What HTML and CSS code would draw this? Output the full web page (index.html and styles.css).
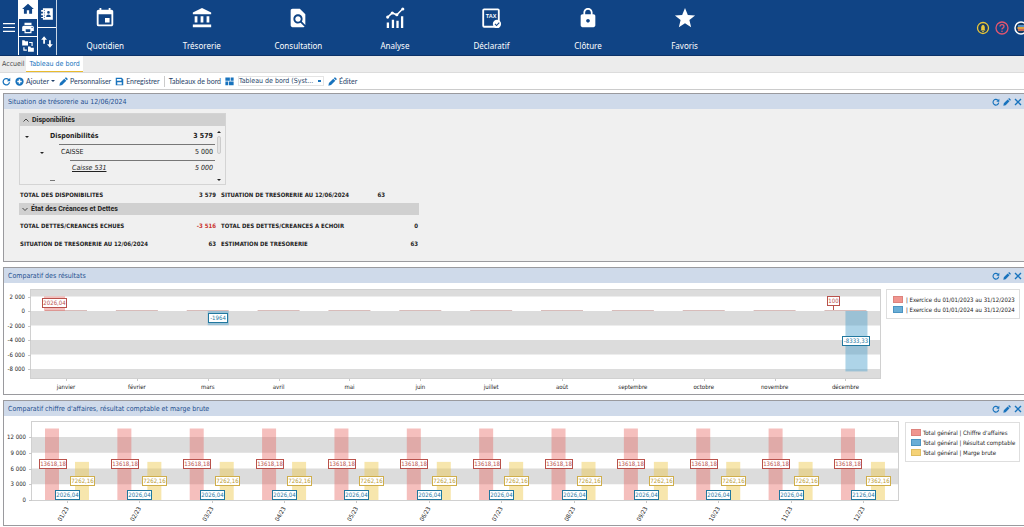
FILE: index.html
```html
<!DOCTYPE html>
<html lang="fr">
<head>
  <meta charset="UTF-8" />
  <meta name="viewport" content="width=device-width, initial-scale=1.0" />
  <title>Tableau de bord</title>
  <link rel="stylesheet" href="styles.css">
</head>
<body>
  <!-- Shared icons -->
  <svg class="sprite" aria-hidden="true">
    <symbol id="i-refresh" viewBox="0 0 24 24"><path d="M20 14a8.500 8.500 0 1 1-2.500-7.500L20 9" fill="none" stroke="currentColor" stroke-width="3.400"/><path d="M22 2v9h-9z"/></symbol>
    <symbol id="i-pencil" viewBox="0 0 24 24"><path d="M1 23l1.500-7L14 4.500l5.500 5.500L8 21.500zM15.500 3l2-2q1-.8 2 0L23 4.500q.8 1 0 2l-2 2z"/></symbol>
    <symbol id="i-close" viewBox="0 0 24 24"><path d="M3 3l18 18M21 3L3 21" fill="none" stroke="currentColor" stroke-width="4"/></symbol>
  </svg>

  <!-- ===== TOP BAR ===== -->
  <header class="topbar">
    <button class="burger" aria-label="Menu"><svg viewBox="0 0 12 9"><path d="M0 0h12v1.200H0zM0 3.900h12v1.200H0zM0 7.800h12V9H0z"/></svg></button>
    <div class="quick">
      <div class="quick-col">
        <button class="home" aria-label="Accueil"><svg viewBox="0 0 24 24"><path d="M10 20v-6h4v6h5v-8h3L12 3 2 12h3v8z"/></svg></button>
        <button aria-label="Imprimer"><svg viewBox="0 0 24 24"><path d="M19 8H5c-1.660 0-3 1.340-3 3v6h4v4h12v-4h4v-6c0-1.660-1.340-3-3-3zm-3 11H8v-5h8v5zm3-7a1 1 0 1 1 0-2 1 1 0 0 1 0 2zM18 3H6v4h12z"/></svg></button>
        <button aria-label="Dossiers"><svg viewBox="0 0 24 24"><path d="M2 2h4l1 2h5v7H2zM12 13h4l1 2h5v7H12z"/><path d="M14 6h5v6M10 19H5v-5" fill="none" stroke="currentColor" stroke-width="2"/></svg></button>
      </div>
      <div class="quick-col">
        <button aria-label="Contacts"><svg viewBox="0 0 24 24"><path fill-rule="evenodd" d="M5 2h17v20H5v-3H2v-2h3v-3H2v-3h3V8H2V5h3zM14.500 7a2.300 2.300 0 1 0 0 4.600 2.300 2.300 0 0 0 0-4.600zM10.500 17h8q0-4-4-4t-4 4z"/><path d="M7.500 5v14" stroke="#104485" stroke-width="1.200" stroke-dasharray="2 2"/></svg></button>
        <button aria-label="Échanges"><svg viewBox="0 0 24 24"><path d="M7 2l5 6H8.500v7h-3V8H2zM17 22l-5-6h3.500V9h3v7H22z"/></svg></button>
      </div>
    </div>
    <nav class="menu">
      <a href="#quotidien"><svg viewBox="0 0 24 24"><path d="M17 12h-5v5h5v-5zM16 1v2H8V1H6v2H5c-1.110 0-2 .9-2 2v14a2 2 0 0 0 2 2h14c1.100 0 2-.9 2-2V5c0-1.100-.9-2-2-2h-1V1h-2zm3 18H5V8h14v11z"/></svg>Quotidien</a>
      <a href="#tresorerie"><svg viewBox="0 0 24 24"><path d="M4 10v7h3v-7H4zm6.500 0v7h3v-7h-3zM2 22h20v-3H2v3zm15-12v7h3v-7h-3zM12 1L2 6v2h20V6L12 1z"/></svg>Trésorerie</a>
      <a href="#consultation"><svg viewBox="0 0 24 24"><path d="M20 19.590V8l-6-6H6c-1.100 0-2 .9-2 2v16c0 1.100.9 2 2 2h12c.45 0 .85-.15 1.190-.4l-4.430-4.430c-.8.520-1.740.830-2.760.830-2.760 0-5-2.240-5-5s2.240-5 5-5 5 2.240 5 5c0 1.020-.31 1.960-.83 2.750L20 19.590zM9 13c0 1.660 1.340 3 3 3s3-1.340 3-3-1.340-3-3-3-3 1.340-3 3z"/></svg>Consultation</a>
      <a href="#analyse"><svg viewBox="0 0 24 24"><path d="M3 17h2.500v6H3zM8.500 14H11v9H8.500zM13.500 15H16v8h-2.500zM18.500 10H21v13h-2.500z"/><path d="M4 11l5-4.500 5 2L20.500 2" fill="none" stroke="currentColor" stroke-width="1.600"/><circle cx="4" cy="11" r="1.700"/><circle cx="9" cy="6.500" r="1.700"/><circle cx="14" cy="8.500" r="1.700"/><circle cx="20.500" cy="2.200" r="1.700"/></svg>Analyse</a>
      <a href="#declaratif"><svg viewBox="0 0 24 24"><rect x="3.500" y="2.500" width="17" height="19" rx="1" fill="none" stroke="currentColor" stroke-width="2"/><text class="tax" x="12" y="12" text-anchor="middle">TAX</text><circle cx="18.500" cy="18.500" r="4.500"/><path d="M16.300 18.500l1.700 1.700 3-3.200" fill="none" stroke="#104485" stroke-width="1.200"/></svg>Déclaratif</a>
      <a href="#cloture"><svg viewBox="0 0 24 24"><path d="M18 8h-1V6c0-2.760-2.240-5-5-5S7 3.240 7 6v2H6c-1.100 0-2 .9-2 2v10c0 1.100.9 2 2 2h12c1.100 0 2-.9 2-2V10c0-1.100-.9-2-2-2zm-6 9c-1.100 0-2-.9-2-2s.9-2 2-2 2 .9 2 2-.9 2-2 2zm3.100-9H8.900V6c0-1.710 1.390-3.100 3.100-3.100s3.100 1.390 3.100 3.100v2z"/></svg>Clôture</a>
      <a href="#favoris"><svg viewBox="0 0 24 24"><path d="M12 17.800L18.700 22l-1.900-7.700 6.200-5.100-7.900-.6L12 1.200 8.900 8.600 1 9.200l6.200 5.100L5.300 22z"/></svg>Favoris</a>
    </nav>
    <div class="account">
      <button class="bell" aria-label="Notifications"><svg viewBox="0 0 14 14"><circle cx="7" cy="7" r="5.500" fill="#173c66" stroke="currentColor" stroke-width="1.300"/><path d="M4.500 9.500l.7-1V6q.3-2 1.800-2.200Q8.500 4 8.800 6v2.500l.7 1zM6 10h2v.8H6z"/></svg></button>
      <button class="help" aria-label="Aide"><svg viewBox="0 0 14 14"><circle cx="7" cy="7" r="6" fill="none" stroke="currentColor" stroke-width="1.300"/><path d="M5 5.600Q5 3.700 7 3.700t2 1.700Q9 6.500 7.800 7.100 7 7.500 7 8.600" fill="none" stroke="currentColor" stroke-width="1.300"/><circle cx="7" cy="10.300" r=".8"/></svg></button>
      <button class="profile" aria-label="Profil"><svg viewBox="0 0 14 14"><circle cx="7" cy="7" r="6" fill="#173c66" stroke="currentColor" stroke-width="1.500"/><path d="M4 4h7v2H4z" fill="#4f8fc9"/><path d="M3.500 6h7.500v2H3.500z" fill="#e0a040"/><path d="M4 8h7v2H4z" fill="#c96a5a"/></svg></button>
    </div>
  </header>

  <!-- ===== TABS ===== -->
  <nav class="tabs">
    <a href="#accueil">Accueil</a>
    <a href="#tableau" class="active">Tableau de bord</a>
  </nav>

  <!-- ===== TOOLBAR ===== -->
  <div class="toolbar">
    <button aria-label="Actualiser"><svg><use href="#i-refresh"/></svg></button>
    <button><svg viewBox="0 0 24 24"><path fill-rule="evenodd" d="M12 1a11 11 0 1 1 0 22 11 11 0 0 1 0-22zM10 6v4H6v4h4v4h4v-4h4v-4h-4V6z"/></svg>Ajouter<i class="caret"></i></button>
    <button><svg><use href="#i-pencil"/></svg>Personnaliser</button>
    <button><svg viewBox="0 0 24 24"><path fill-rule="evenodd" d="M2 2h16l4 4v16H2zM5 5v5h12V5zM6 14v6h12v-6z"/></svg>Enregistrer</button>
    <span class="sep"></span>
    <label for="board">Tableaux de bord</label>
    <svg viewBox="0 0 24 24"><path d="M1 1h12v9H1zM15 1h8v9h-8zM1 12h7v10H1zM10 12h13v10H10z"/></svg>
    <select id="board"><option>Tableau de bord (Syst...</option></select>
    <button><svg><use href="#i-pencil"/></svg>Éditer</button>
  </div>

  <main>
    <!-- Trésorerie -->
    <section class="panel cash">
      <div class="panel-head">
        <h2>Situation de trésorerie au 12/06/2024</h2>
        <button aria-label="Actualiser"><svg><use href="#i-refresh"/></svg></button>
        <button aria-label="Modifier"><svg><use href="#i-pencil"/></svg></button>
        <button aria-label="Fermer"><svg><use href="#i-close"/></svg></button>
      </div>
      <div class="cash-body">
        <div class="group">
          <button class="group-head"><svg viewBox="0 0 6 6"><path d="M.5 4.500L3 2l2.500 2.500"/></svg>Disponibilités</button>
          <div class="tree">
            <table>
              <colgroup><col class="c1"><col class="c2"><col class="c3"><col><col class="amount"></colgroup>
              <tr class="lvl1"><td><i class="caret"></i></td><td colspan="3">Disponibilités</td><td>3 579</td></tr>
              <tr class="lvl2"><td></td><td><i class="caret"></i></td><td colspan="2">CAISSE</td><td>5 000</td></tr>
              <tr class="lvl3"><td></td><td></td><td></td><td><a href="#caisse">Caisse 531</a></td><td>5 000</td></tr>
              <tr class="cut"><td></td><td colspan="4"><i class="dash"></i></td></tr>
            </table>
            <div class="scroll"><i class="up"></i><span></span><i class="caret"></i></div>
          </div>
        </div>
        <div class="totals short">
          <span>TOTAL DES DISPONIBILITES</span><b>3 579</b>
          <span>SITUATION DE TRESORERIE AU 12/06/2024</span><b>63</b>
        </div>
        <button class="group-head wide"><svg viewBox="0 0 6 6"><path d="M.5 2L3 4.500 5.500 2"/></svg>État des Créances et Dettes</button>
        <div class="totals tall">
          <span>TOTAL DETTES/CREANCES ECHUES</span><b class="neg">-3 516</b>
          <span>TOTAL DES DETTES/CREANCES A ECHOIR</span><b>0</b>
        </div>
        <div class="totals">
          <span>SITUATION DE TRESORERIE AU 12/06/2024</span><b>63</b>
          <span>ESTIMATION DE TRESORERIE</span><b>63</b>
        </div>
      </div>
    </section>

    <!-- Résultats -->
    <section class="panel">
      <div class="panel-head">
        <h2>Comparatif des résultats</h2>
        <button aria-label="Actualiser"><svg><use href="#i-refresh"/></svg></button>
        <button aria-label="Modifier"><svg><use href="#i-pencil"/></svg></button>
        <button aria-label="Fermer"><svg><use href="#i-close"/></svg></button>
      </div>
      <div class="chart-row">
        <svg class="chart" id="results" viewBox="0 0 879 111"></svg>
        <ul class="legend">
          <li><i class="red"></i>| Exercice du 01/01/2023 au 31/12/2023</li>
          <li><i class="blue"></i>| Exercice du 01/01/2024 au 31/12/2024</li>
        </ul>
      </div>
    </section>

    <!-- Chiffre d'affaires -->
    <section class="panel">
      <div class="panel-head">
        <h2>Comparatif chiffre d'affaires, résultat comptable et marge brute</h2>
        <button aria-label="Actualiser"><svg><use href="#i-refresh"/></svg></button>
        <button aria-label="Modifier"><svg><use href="#i-pencil"/></svg></button>
        <button aria-label="Fermer"><svg><use href="#i-close"/></svg></button>
      </div>
      <div class="chart-row">
        <svg class="chart" id="sales" viewBox="0 0 898 109"></svg>
        <ul class="legend narrow">
          <li><i class="red"></i>Total général | Chiffre d'affaires</li>
          <li><i class="blue"></i>Total général | Résultat comptable</li>
          <li><i class="yellow"></i>Total général | Marge brute</li>
        </ul>
      </div>
    </section>
  </main>

  <script src="charts.js"></script>
</body>
</html>
```
FILE: styles.css
```css
:root {
  --navy: #104485;
  --blue: #1873bd;
  --title: #1f5090;
  --head: #cfdaea;
  --line: #9a9a9e;
  --grey: #f0f0f0;
}
* { box-sizing: border-box; margin: 0; padding: 0; }

body {
  font-family: "DejaVu Sans Condensed", "DejaVu Sans", sans-serif;
  font-size: 7px;
  color: #222;
  background: #fff;
  overflow-x: hidden;
}
button { font: inherit; color: inherit; background: none; border: 0; display: flex; align-items: center; }
a { color: inherit; text-decoration: none; }
svg { fill: currentColor; display: block; }
.sprite { display: none; }

.caret {
  border: 2px solid transparent;
  border-top-color: currentColor;
  border-bottom: 0;
  display: inline-block;
}

/* ===== TOP BAR ===== */
.topbar {
  display: flex;
  height: 56px;
  background: var(--navy);
  border-bottom: 1px solid #0b3268;
  color: #fff;
}
.burger { width: 18px; justify-content: center; }
.burger svg { width: 12px; }
.quick { display: flex; border-right: 1px solid #c9d6e6; }
.quick-col { display: flex; flex-direction: column; width: 19px; border-left: 1px solid #fff; }
.quick-col button { flex: 1; justify-content: center; border-top: 1px solid #fff; }
.quick-col button:first-child { border-top: 0; }
.quick-col svg { width: 14px; height: 14px; }
.quick .home { background: #fff; color: var(--navy); }
.menu { display: flex; width: 66%; }
.menu a {
  flex: 1;
  padding-top: 7px;
  display: flex;
  flex-direction: column;
  align-items: center;
  gap: 11px;
  font: 8px/12px "Noto Sans", sans-serif;
}
.menu svg { width: 22px; height: 22px; }
.tax { font: bold 6px "Liberation Sans", sans-serif; }
.account { display: flex; gap: 5px; margin: 0 -4px 0 auto; }
.account svg { width: 14px; height: 14px; }
.bell { color: #e8c63c; }
.help { color: #e2566f; }

/* ===== TABS ===== */
.tabs {
  display: flex;
  height: 17px;
  background: #ececec;
  border-bottom: 1px solid #dcdcdc;
  color: #4a4a4a;
}
.tabs a { padding: 0 2px; line-height: 16px; }
.tabs .active { height: 16px; padding: 0 3px; background: #fff; color: var(--blue); border-bottom: 1px solid #e9bb2d; }

/* ===== TOOLBAR ===== */
.toolbar {
  display: flex;
  align-items: center;
  gap: 4px;
  height: 17px;
  padding-left: 2px;
  border-bottom: 1px solid #ccc;
  font-family: Lato, sans-serif;
  color: #1f3f68;
}
.toolbar button { gap: 2px; }
.toolbar svg { width: 9px; height: 9px; color: var(--blue); flex: none; }
.toolbar .sep { width: 1px; height: 11px; background: #ccc; }
.toolbar select {
  width: 86px;
  height: 10px;
  border: 1px solid #e4e4e4;
  font: 7px "DejaVu Sans Condensed", sans-serif;
  color: inherit;
  background: linear-gradient(var(--blue), var(--blue)) right 2px center / 3px 2px no-repeat #fff;
  appearance: none;
}

/* ===== PANELS ===== */
main { display: flex; flex-direction: column; gap: 5px; padding: 3px 0 0 3px; }
.panel { border: 1px solid var(--line); border-right: 0; }
.panel-head {
  display: flex;
  align-items: center;
  gap: 3px;
  height: 15px;
  padding: 0 2px 0 4px;
  background: var(--head);
  color: var(--blue);
}
.panel-head h2 { flex: 1; font-size: 7px; font-weight: normal; color: var(--title); }
.panel-head svg { width: 8px; height: 8px; }

/* ===== CASH ===== */
.cash { background: var(--grey); }
.cash-body { width: 415px; padding: 4px 0 9px 15px; }
.group { width: 207px; border: 1px solid #d4d4d4; }
.group-head {
  gap: 3px;
  width: 100%;
  height: 12px;
  padding-left: 3px;
  background: #d0d0d0;
  font-family: Roboto, "Noto Sans", sans-serif;
  font-weight: bold;
}
.group-head svg { width: 6px; fill: none; stroke: currentColor; stroke-width: 0.8; }
.tree { display: flex; height: 58px; overflow: hidden; padding: 2px 2px 0 0; }
.tree table { flex: 1; height: 64px; border-collapse: collapse; table-layout: fixed; }
.c1 { width: 10px; }
.c2 { width: 24px; }
.c3 { width: 11px; }
.amount { width: 50px; }
.tree td { height: 16px; padding-left: 5px; }
.tree td:last-child { text-align: right; padding-right: 2px; }
.tree .lvl1 td:nth-child(2) { padding-left: 15px; }
.tree .lvl1 { font-weight: bold; }
.tree .lvl2 td:nth-child(3), .tree .lvl3 td:nth-child(4) { padding-left: 2px; }
.tree .lvl2 td:nth-child(n+3), .tree .lvl3 td:nth-child(n+4) { border-top: 1px solid #777; }
.tree .lvl3 { font-style: italic; }
.tree .lvl3 a { text-decoration: underline; }
.tree .cut td { padding: 4px 0 0 15px; vertical-align: top; }
.dash { display: block; width: 5px; height: 1px; background: #777; }
.scroll { width: 8px; display: flex; flex-direction: column; align-items: center; padding: 3px 0; }
.scroll span { width: 4px; height: 18px; margin: 3px 0 auto; border: 1px solid #ccc; border-radius: 2px; background: #e4e4e4; }
.scroll .up { border: 2px solid transparent; border-bottom-color: currentColor; border-top: 0; }

.totals {
  display: grid;
  grid-template-columns: 1fr 40px 163px 34px;
  height: 17px;
  padding: 0 1px;
  align-items: center;
  font-size: 6px;
  font-weight: bold;
}
.totals b { text-align: right; }
.totals b:nth-child(2) { padding-right: 5px; }
.totals.short { padding-right: 34px; grid-template-columns: 1fr 40px 140px 24px; height: 18px; }
.totals.tall { height: 20px; }
.neg { color: #c9302c; }

/* ===== CHARTS ===== */
.chart-row { display: flex; align-items: flex-start; gap: 3px; padding-right: 4px; }
.chart { flex: 1; min-width: 0; font-size: 6px; }
.chart .band { fill: #dcdcdc; }
.chart .frame { fill: none; stroke: #d0d0d0; }
.chart .tick { stroke: #c8c8c8; }
.chart .red { fill: #e5605a; fill-opacity: 0.4; }
.chart .blue { fill: #4b9fcb; fill-opacity: 0.45; }
.chart .yellow { fill: #edc84a; fill-opacity: 0.45; }
.chart .tag { fill: #fff; fill-opacity: 1; }
.chart .tag.red { stroke: #b9524c; }
.chart .tag.blue { stroke: #22789f; }
.chart .tag.yellow { stroke: #cfae4b; }
.chart .val { text-anchor: middle; fill-opacity: 1; }
.chart .val.red { fill: #b9524c; }
.chart .val.blue { fill: #22789f; }
.chart .val.yellow { fill: #b99832; }
.chart .zero { stroke: #d8bcba; }

.legend {
  width: 134px;
  margin-top: 6px;
  padding: 4px 6px;
  border: 1px solid #dedede;
  list-style: none;
  font-size: 6px;
}
.legend.narrow { width: 115px; padding: 4px 5px; }
.legend li { display: flex; align-items: center; gap: 3px; height: 10px; white-space: nowrap; }
.legend.narrow li { gap: 2px; }
.legend i { flex: none; width: 10px; height: 7px; }
.legend .red { background: #f0958f; border: 1px solid #dd837d; }
.legend .blue { background: #6aaed6; border: 1px solid #4c94c2; }
.legend .yellow { background: #f5d277; border: 1px solid #dfbd62; }
```
FILE: charts.js
```js
const NS = 'http://www.w3.org/2000/svg';

const add = (svg, tag, attrs, text) => {
  const el = document.createElementNS(NS, tag);
  for (const k in attrs) el.setAttribute(k, attrs[k]);
  if (text !== undefined) el.textContent = text;
  svg.appendChild(el);
};

const rect = (svg, cls, x, y, width, height) => add(svg, 'rect', { class: cls, x, y, width, height });

// value in a white box, centred on x/y
const tag = (svg, color, x, y, text, w) => {
  const left = Math.round(x - w / 2) + 0.5;
  rect(svg, 'tag ' + color, left, y - 4.5, w, 9);
  add(svg, 'text', { class: 'val ' + color, x: left + w / 2, y: y + 2 }, text);
};

const axis = (svg, values, right, y) => {
  values.forEach(v => {
    const label = String(v).replace(/(\d)(\d{3})$/, '$1 $2');
    add(svg, 'text', { x: right - 6, y: y(v) + 2, 'text-anchor': 'end' }, label);
    add(svg, 'path', { class: 'tick', d: `M${right - 3} ${Math.round(y(v)) + 0.5}h3` });
  });
};

// 1. Comparatif des résultats
(() => {
  const svg = document.getElementById('results');
  const months = ['janvier', 'février', 'mars', 'avril', 'mai', 'juin', 'juillet', 'août', 'septembre', 'octobre', 'novembre', 'décembre'];
  const y = v => 28 - v * 14.5 / 2000;
  const x = i => 62 + i * 70.86;

  rect(svg, 'band', 27, 6, 850, y(2000) - 6);
  [0, -4000].forEach(v => rect(svg, 'band', 27, y(v), 850, 14.5));
  rect(svg, 'band', 27, y(-8000), 850, 95 - y(-8000));
  rect(svg, 'frame', 26.5, 6.5, 850, 89);
  axis(svg, [2000, 0, -2000, -4000, -6000, -8000], 27, y);

  months.forEach((m, i) => {
    add(svg, 'text', { x: x(i), y: 106, 'text-anchor': 'middle' }, m);
    add(svg, 'path', { class: 'tick', d: `M${Math.round(x(i)) + 0.5} 96v2` });
    add(svg, 'path', { class: 'zero', d: `M${x(i) - 21} 27.5h42` });
  });

  rect(svg, 'red', x(0) - 22, y(2026), 21, 28 - y(2026));
  rect(svg, 'blue', x(2), 28, 21, y(-1964) - 28);
  rect(svg, 'blue', x(11), 28, 22, y(-8333) - 28);
  add(svg, 'path', { class: 'tag red', d: `M${Math.round(x(11)) - 11.5} 22v5` });
  tag(svg, 'red', x(0) - 12, 20, '2026,04', 24);
  tag(svg, 'blue', x(2) + 10, 35, '-1964', 19);
  tag(svg, 'red', x(11) - 12, 18, '100', 12);
  tag(svg, 'blue', x(11) + 10, 58, '-8333,33', 27);
})();

// 2. Chiffre d'affaires, résultat comptable et marge brute
(() => {
  const svg = document.getElementById('sales');
  const y = v => 84 - v * 15.75 / 3000;
  const x = i => 63 + i * 72.36;

  [6000, 12000].forEach(v => rect(svg, 'band', 27, y(v), 867, 15.75));
  rect(svg, 'frame', 27.5, 5.5, 867, 79);
  axis(svg, [12000, 9000, 6000, 3000, 0], 28, y);

  for (let i = 0; i < 12; i++) {
    const last = i === 11;
    rect(svg, 'red', x(i) - 22, y(13618.18), 14, 84 - y(13618.18));
    rect(svg, 'yellow', x(i) + 8, y(7262.16), 14, 84 - y(7262.16));
    tag(svg, 'red', x(i) - 15, 48, '13618,18', 27);
    tag(svg, 'yellow', x(i) + 15, 65, last ? '7362,16' : '7262,16', 24);
    tag(svg, 'blue', x(i), 79, last ? '2126,04' : '2026,04', 24);
    add(svg, 'path', { class: 'tick', d: `M${Math.round(x(i)) + 0.5} 85v2` });
    add(svg, 'text', { x: 0, y: 0, 'text-anchor': 'middle', transform: `translate(${x(i) - 2} 99) rotate(-60)` }, String(i + 1).padStart(2, '0') + '/23');
  }
})();
```
